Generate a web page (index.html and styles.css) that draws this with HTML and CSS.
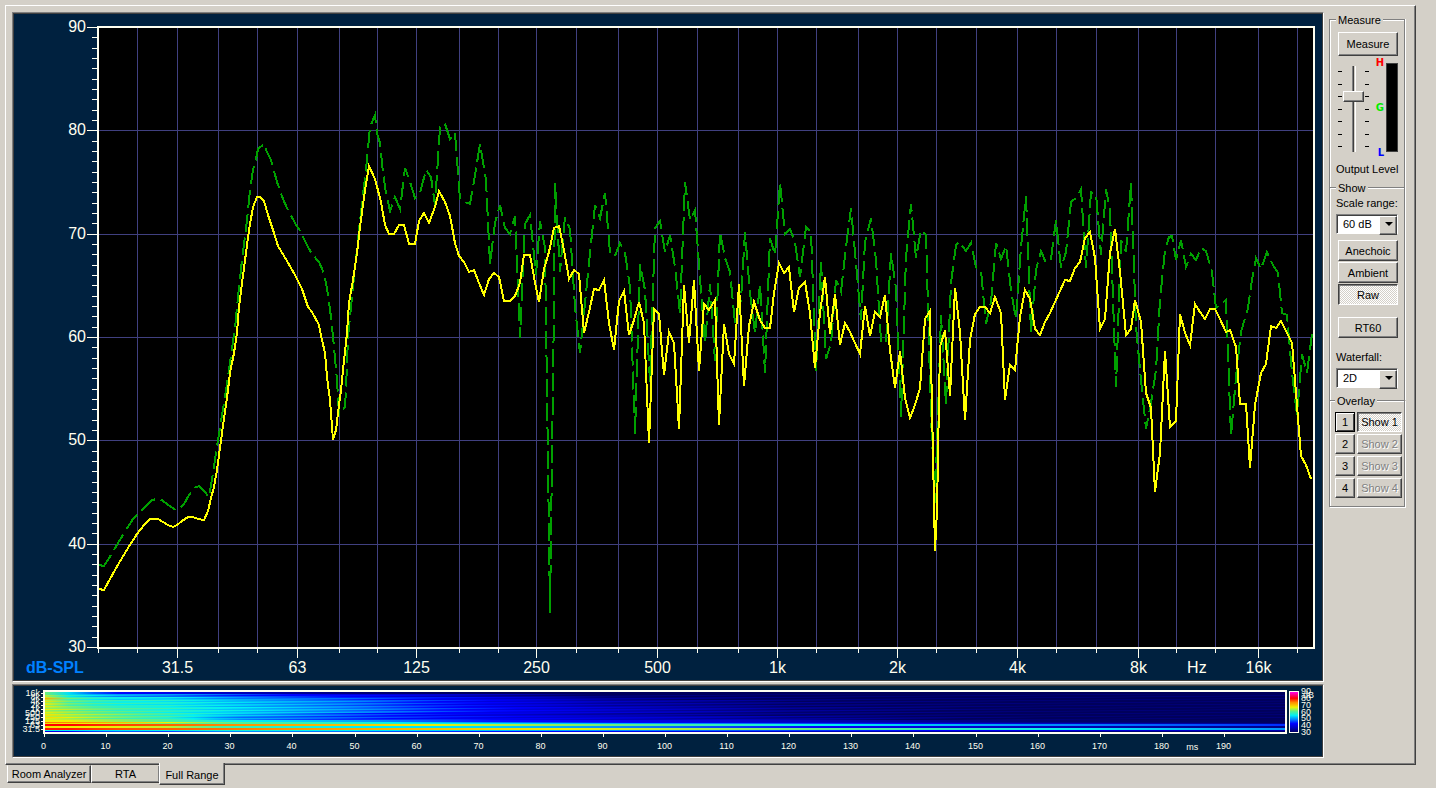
FILE: index.html
```html
<!DOCTYPE html>
<html lang="en">
<head>
  <meta charset="UTF-8">
  <title>Room Analyzer</title>
  <link rel="stylesheet" href="styles.css">
</head>
<body>
  <main class="sheet">
    <div class="charts">
      <div class="panel panel-response">
        <svg id="response" class="chart" role="img" aria-label="Frequency response"></svg>
      </div>
      <div class="panel panel-waterfall">
        <svg id="waterfall" class="chart" role="img" aria-label="Waterfall"></svg>
      </div>
    </div>

    <div class="sidebar">
      <section class="group group-measure">
        <h2 class="group-title">Measure</h2>
        <button class="btn btn-measure">Measure</button>
        <div class="levels">
          <div class="ticks"><i></i><i></i><i></i><i></i><i></i><i></i><i></i></div>
          <input type="range" id="outputLevel" class="fader" min="0" max="6" value="4">
          <div class="ticks"><i></i><i></i><i></i><i></i><i></i><i></i><i></i></div>
          <div class="marks">
            <b class="high">H</b>
            <b class="good">G</b>
            <b class="low">L</b>
          </div>
          <div class="meter"></div>
        </div>
        <label class="caption" for="outputLevel">Output Level</label>
      </section>

      <section class="group group-show">
        <h2 class="group-title">Show</h2>
        <label class="caption" for="scaleRange">Scale range:</label>
        <div class="combo">
          <select id="scaleRange">
            <option>30 dB</option>
            <option selected>60 dB</option>
            <option>90 dB</option>
          </select>
        </div>
        <div class="modes">
          <button class="btn">Anechoic</button>
          <button class="btn">Ambient</button>
          <button class="btn pressed">Raw</button>
        </div>
        <button class="btn btn-rt60">RT60</button>
        <label class="caption" for="waterfallMode">Waterfall:</label>
        <div class="combo">
          <select id="waterfallMode">
            <option selected>2D</option>
            <option>3D</option>
          </select>
        </div>
      </section>

      <section class="group group-overlay">
        <h2 class="group-title">Overlay</h2>
        <div class="overlays">
          <button class="btn focused">1</button><button class="btn pressed">Show 1</button>
          <button class="btn">2</button><button class="btn" disabled>Show 2</button>
          <button class="btn">3</button><button class="btn" disabled>Show 3</button>
          <button class="btn">4</button><button class="btn" disabled>Show 4</button>
        </div>
      </section>
    </div>
  </main>

  <nav class="tabs">
    <button class="tab tab-room">Room Analyzer</button>
    <button class="tab tab-rta">RTA</button>
    <button class="tab tab-full active">Full Range</button>
  </nav>

  <script src="charts.js"></script>
</body>
</html>
```

FILE: styles.css
```css
* {
  box-sizing: border-box;
}
body {
  margin: 0;
  padding: 5px 20px 0 5px;
  height: 100vh;
  min-height: 600px;
  display: flex;
  flex-direction: column;
  background: #d4d0c8;
  color: #000;
  font-family: "Liberation Sans", Arial, sans-serif;
  font-size: 11px;
  line-height: 14px;
}
button, select {
  font: inherit;
  color: inherit;
}

/* tab page */
.sheet {
  flex: 1;
  min-height: 0;
  display: flex;
  gap: 5px;
  padding: 6px 10px 6px 6px;
  border: solid;
  border-width: 1px;
  border-color: #fff #404040 #404040 #fff;
  box-shadow: inset -1px -1px #808080;
}
.charts {
  flex: 1;
  min-width: 0;
  display: flex;
  flex-direction: column;
  gap: 2px;
}
.panel {
  padding: 1px;
  border: 1px solid;
  border-color: #808080 #fff #fff #808080;
  background: #404040;
}
.panel-response {
  flex: 1;
  min-height: 0;
}
.panel-waterfall {
  height: 74px;
}
.chart {
  display: block;
  width: 100%;
  height: 100%;
  background: #00213f;
  overflow: hidden;
}

/* charts */
.grid {
  stroke: #404080;
  shape-rendering: crispEdges;
}
.tick {
  stroke: #fffff0;
  shape-rendering: crispEdges;
}
.frame {
  fill: none;
  stroke: #fffff0;
  stroke-width: 2;
  shape-rendering: crispEdges;
}
.plot {
  fill: #000;
}
.trace {
  fill: none;
  stroke: #ff0;
  stroke-width: 2;
  shape-rendering: crispEdges;
}
.trace-overlay {
  stroke: #00a000;
  stroke-dasharray: 18 6;
}
.axis {
  fill: #fffff0;
  font-size: 16px;
}
.unit {
  fill: #0080ff;
  font-size: 16px;
  font-weight: bold;
}
.small {
  fill: #fffff0;
  font-size: 9px;
}
.middle {
  text-anchor: middle;
}
.end {
  text-anchor: end;
}

/* sidebar */
.sidebar {
  width: 76px;
  padding-top: 7px;
}
.group {
  border: solid #808080;
  border-width: 1px 1px 0;
  box-shadow: inset 1px 1px #fff, 1px 0 #fff;
  padding: 0 6px;
}
.group-title {
  width: max-content;
  margin: -7px 0 0;
  padding: 0 2px;
  background: #d4d0c8;
  font-size: 11px;
  font-weight: normal;
}
.group-measure {
  height: 168px;
}
.group-show {
  height: 213px;
}
.group-overlay {
  height: 107px;
  padding: 0 2px 0 5px;
  border-bottom-width: 1px;
  box-shadow: inset 1px 1px #fff, 1px 1px #fff;
}
.caption {
  display: block;
  white-space: nowrap;
}
.btn {
  display: block;
  height: 21px;
  width: 60px;
  margin: 0 0 0 2px;
  padding: 0;
  border: 1px solid;
  border-color: #fff #404040 #404040 #fff;
  box-shadow: inset -1px -1px #808080;
  background: #d4d0c8;
}
.btn:disabled {
  color: #808080;
  text-shadow: 1px 1px #fff;
}
.btn.pressed {
  border-color: #404040 #fff #fff #404040;
  box-shadow: inset 1px 1px #808080;
  background: repeating-conic-gradient(#fff 0 25%, #d4d0c8 0 50%) 0 0 / 2px 2px;
}
.btn.focused {
  border-color: #000;
  box-shadow: inset 1px 1px #fff, inset -1px -1px #404040;
}
.btn-measure {
  height: 24px;
  margin-top: 5px;
}

.levels {
  display: flex;
  height: 100px;
  margin: 2px 0 4px;
  padding: 0 0 0 2px;
}
.ticks {
  width: 4px;
  height: 76px;
  margin-top: 13px;
  display: flex;
  flex-direction: column;
  justify-content: space-between;
}
.ticks i {
  height: 1px;
  background: #000;
}
.fader {
  appearance: none;
  writing-mode: vertical-lr;
  direction: rtl;
  width: 21px;
  height: 86px;
  margin: 8px 1px 0;
  background: linear-gradient(90deg, #808080 1px, #404040 1px 2px, #d4d0c8 2px 3px, #fff 3px) center / 4px 100% no-repeat;
}
.fader::-webkit-slider-thumb {
  appearance: none;
  width: 21px;
  height: 11px;
  border: 1px solid;
  border-color: #fff #404040 #404040 #fff;
  box-shadow: inset -1px -1px #808080;
  background: #d4d0c8;
}
.marks {
  width: 17px;
  padding-right: 2px;
  display: flex;
  flex-direction: column;
  justify-content: space-between;
  align-items: flex-end;
  font-family: "DejaVu Sans", sans-serif;
  font-size: 10px;
  line-height: 10px;
}
.high {
  color: #f00;
}
.good {
  color: #0e0;
}
.low {
  color: #00f;
}
.meter {
  width: 12px;
  height: 89px;
  margin-top: 5px;
  border: 1px solid #404040;
  background: #000;
}

.combo {
  position: relative;
  width: 62px;
  height: 20px;
  margin-top: 4px;
}
.combo select {
  appearance: none;
  width: 100%;
  height: 100%;
  padding: 0 18px 0 6px;
  border: 1px solid;
  border-color: #808080 #fff #fff #808080;
  border-radius: 0;
  box-shadow: inset 1px 1px #404040;
  background: #fff;
}
.combo::before {
  content: "";
  position: absolute;
  top: 2px;
  right: 1px;
  width: 16px;
  height: 17px;
  border: 1px solid;
  border-color: #fff #404040 #404040 #fff;
  box-shadow: inset -1px -1px #808080;
  background: #d4d0c8;
  pointer-events: none;
}
.combo::after {
  content: "";
  position: absolute;
  top: 8px;
  right: 5px;
  border: 4px solid transparent;
  border-top-color: #000;
  border-bottom: 0;
  pointer-events: none;
}
.group-show .group-title {
  margin-bottom: 1px;
}
.modes {
  display: flex;
  flex-direction: column;
  gap: 1px;
  margin-top: 6px;
}
.btn-rt60 {
  margin: 12px 0 12px 2px;
}

.overlays {
  display: grid;
  grid-template-columns: 20px 45px;
  gap: 2px;
  margin-top: 4px;
}
.overlays .btn {
  width: 100%;
  height: 20px;
  margin: 0;
}

/* tabs */
.tabs {
  display: flex;
  height: 23px;
  padding-left: 2px;
}
.tab {
  height: 18px;
  padding: 0;
  border: 1px solid;
  border-color: transparent #404040 #404040 #fff;
  box-shadow: inset -1px -1px #808080;
  background: #d4d0c8;
}
.tab-room {
  width: 84px;
}
.tab-rta {
  width: 68px;
  border-right: 0;
}
.tab-full {
  width: 66px;
}
.tab.active {
  height: 22px;
  margin-top: -2px;
  padding-top: 2px;
  border-top: 0;
  z-index: 1;
}
```

FILE: charts.js
```js
const NS = 'http://www.w3.org/2000/svg';

// traces are stored as x,y pairs on this recording area
const AREA = { left: 98, top: 27, width: 1216, height: 620 };

const current = `99,589 104,590 110,579 119,563 128,548 137,534 144,525 150,519 158,519 163,522 168,525
173,527 177,525 182,521 188,517 193,517 198,519 204,520 208,511 211,498 214,487 217,470 222,433 228,390
230,373 234,353 237,333 239,307 242,283 246,253 249,230 253,207 257,197 260,197 264,201 268,215 273,230
278,246 287,261 295,275 302,289 308,307 312,312 319,325 322,340 325,353 327,377 330,400 333,440 336,430
338,413 341,390 343,370 347,333 349,303 353,280 357,253 360,227 365,190 369,166 375,179 381,202 385,225
389,234 394,234 399,225 404,225 409,244 415,244 419,221 424,213 429,223 435,207 439,191 445,202 450,216
455,243 459,256 464,262 469,272 474,270 479,283 484,295 489,279 494,273 499,277 504,301 510,301 515,296
520,283 524,255 530,255 534,277 539,302 544,269 549,252 554,228 559,226 564,250 569,279 574,270 579,274
584,333 589,312 594,289 599,290 604,280 609,323 614,350 619,301 624,291 629,335 634,320 639,302 644,323
649,443 654,309 659,314 664,375 669,332 674,343 679,429 684,285 689,343 694,280 699,371 704,304 709,310
715,300 719,425 724,324 729,354 734,364 739,284 744,386 749,326 754,302 760,320 765,328 770,328 774,293
779,263 784,273 789,267 794,312 799,288 805,282 810,313 815,368 820,313 825,277 830,334 835,294 840,345
845,323 850,332 860,354 865,306 870,336 875,312 880,317 885,295 890,350 895,388 900,351 905,398 910,418
915,405 920,388 925,319 930,311 933,455 935,551 937,510 940,347 945,330 950,396 955,288 960,332 965,420
970,340 975,314 980,307 985,307 990,313 995,297 1001,313 1005,400 1010,365 1015,370 1020,317 1025,290
1030,299 1035,329 1040,335 1045,322 1050,313 1065,280 1070,281 1075,268 1080,262 1085,238 1090,232
1095,258 1100,329 1105,319 1110,253 1115,229 1120,272 1126,335 1131,329 1135,300 1141,322 1146,393
1151,408 1155,492 1160,453 1165,351 1170,427 1176,421 1180,314 1185,333 1190,345 1195,304 1200,312
1205,319 1210,309 1215,309 1220,319 1226,332 1230,330 1236,347 1240,404 1246,404 1250,468 1255,405
1261,373 1266,364 1271,326 1276,328 1281,321 1292,343 1296,393 1301,456 1306,465 1311,479`;

const overlay = `99,565 104,566 111,555 118,543 126,530 133,519 146,506 152,500 157,499 162,500 168,505
176,510 180,508 184,504 189,495 194,488 199,486 204,491 209,497 213,473 218,440 225,397 230,363 235,328
238,297 242,260 247,220 250,190 253,170 256,159 258,149 264,144 267,152 271,160 277,182 283,199 288,210
295,223 300,231 308,247 312,254 319,262 323,271 326,283 328,295 331,317 334,347 337,380 339,415 345,407
346,390 348,337 353,287 359,230 367,160 370,127 375,115 377,133 380,143 383,173 386,193 390,211 395,197
400,209 405,168 410,182 415,198 420,193 426,170 431,177 435,205 440,127 443,124 445,124 450,139 455,133
460,199 465,202 470,204 475,175 480,144 486,180 490,264 495,223 500,205 505,228 510,234 515,216 520,338
525,224 530,215 536,275 540,221 545,248 548,463 550,613 554,303 555,183 560,272 565,217 570,229 575,307
580,353 585,303 590,253 595,205 600,218 605,193 610,253 615,256 620,243 625,253 630,287 635,434 640,264
645,290 650,382 655,228 660,221 665,252 670,235 675,267 680,313 685,182 690,220 695,210 700,278 705,343
710,284 715,361 720,232 725,258 730,272 735,323 741,300 745,232 750,293 755,333 760,284 765,373 770,238
775,255 780,183 785,234 790,229 795,242 800,277 806,227 811,232 816,371 821,262 826,359 831,343 836,280
841,292 846,247 851,208 856,263 861,320 865,242 871,218 876,260 881,341 886,343 891,253 896,288 901,417
906,257 911,204 916,258 921,230 926,235 931,417 935,503 938,413 941,315 946,405 951,283 956,245 959,242
966,251 971,243 976,267 981,271 986,324 991,302 996,243 1001,259 1006,246 1011,290 1016,319 1021,247
1026,196 1031,333 1036,270 1041,251 1046,263 1051,259 1056,220 1061,268 1066,252 1071,202 1077,197
1081,189 1086,268 1091,192 1096,194 1101,255 1106,189 1110,210 1116,387 1121,240 1126,252 1131,183
1136,327 1141,380 1146,429 1151,403 1156,370 1160,300 1165,250 1169,237 1172,236 1176,260 1181,240
1186,267 1191,254 1196,260 1201,248 1206,251 1212,272 1216,308 1226,300 1231,436 1236,377 1241,332
1248,308 1252,280 1256,258 1261,269 1267,252 1273,265 1278,273 1282,313 1287,315 1292,373 1297,415
1302,354 1307,373 1312,334`;

// level in dB of each waterfall band at these times (ms)
const times = [0, 4, 10, 20, 30, 50, 70, 90, 120, 160, 200];
const bands = [
  { rows: 2, db: [62, 54, 44, 41, 37, 32, 30, 30, 30, 30, 30] },
  { rows: 3, db: [64, 56, 51, 49, 46, 42, 36, 31, 30, 30, 30] },
  { rows: 3, db: [70, 60, 55, 54, 50, 46, 41, 34, 31, 30, 30] },
  { rows: 7, db: [66, 61, 57, 56, 53, 48, 42, 36, 32, 30, 30] },
  { rows: 6, db: [65, 63, 60, 57, 54, 49, 43, 38, 33, 30, 30] },
  { rows: 3, db: [67, 64, 62, 58, 53, 46, 41, 36, 32, 30, 30] },
  { rows: 4, db: [67, 65, 62, 58, 50, 46, 42, 39, 34, 30, 30] },
  { rows: 2, db: [67, 67, 64, 60, 56, 51, 44, 42, 37, 31, 30] },
  { rows: 1, db: [75, 74, 72, 67, 61, 57, 50, 44, 39, 33, 30] },
  { rows: 1, db: [68, 68, 66, 62, 60, 58, 55, 52, 47, 38, 33] },
  { rows: 2, db: [80, 80, 78, 76, 74, 70, 65, 62, 56, 50, 45] },
  { rows: 2, db: [68, 67, 67, 65, 59, 55, 54, 50, 44, 37, 33] },
  { rows: 2, db: [79, 79, 77, 76, 75, 72, 69, 66, 62, 56, 50] },
  { rows: 1, db: [56, 55, 54, 56, 57, 55, 53, 50, 46, 41, 36] },
  { rows: 1, db: [40, 42, 48, 46, 50, 48, 44, 42, 38, 33, 31] }
];
const palette = [
  [30, 0, 0, 92], [37, 0, 0, 190], [43, 0, 0, 255], [49, 0, 130, 255], [55, 0, 240, 245],
  [61, 90, 240, 140], [67, 240, 240, 0], [74, 255, 140, 0], [80, 255, 0, 0], [90, 255, 0, 255]
];

function add(parent, name, attrs, text) {
  const el = document.createElementNS(NS, name);
  for (const key in attrs) el.setAttribute(key, attrs[key]);
  if (text !== undefined) el.textContent = text;
  parent.appendChild(el);
  return el;
}

function line(svg, cls, x1, y1, x2, y2) {
  add(svg, 'path', { class: cls, d: `M${x1} ${y1}L${x2} ${y2}` });
}

function color(db) {
  const v = Math.max(30, Math.min(90, db));
  let i = 1;
  while (palette[i][0] < v) i++;
  const a = palette[i - 1], b = palette[i];
  const t = (v - a[0]) / (b[0] - a[0]);
  return `rgb(${[1, 2, 3].map(n => Math.round(a[n] + (b[n] - a[n]) * t)).join(',')})`;
}

function levelAt(band, t) {
  let n = 1;
  while (times[n] < t) n++;
  const k = (t - times[n - 1]) / (times[n] - times[n - 1]);
  return band.db[n - 1] + (band.db[n] - band.db[n - 1]) * k;
}

function drawResponse() {
  const svg = document.getElementById('response');
  svg.replaceChildren();
  const left = 84, top = 13;
  const w = svg.clientWidth - left - 8;
  const h = svg.clientHeight - top - 33;
  const bottom = top + h;

  add(svg, 'rect', { class: 'plot', x: left, y: top, width: w, height: h });

  for (let db = 30; db <= 90; db++) {
    const y = Math.round(bottom - (db - 30) / 60 * h) + 0.5;
    const major = db % 10 === 0;
    line(svg, 'tick', left - (major ? 11 : 6), y, left, y);
    if (major) {
      if (db > 30 && db < 90) line(svg, 'grid', left, y, left + w, y);
      add(svg, 'text', { class: 'axis end', x: left - 12, y: y + 4 }, db);
    }
  }

  const freqs = [20, 25, 31.5, 40, 50, 63, 80, 100, 125, 160, 200, 250, 315, 400, 500, 630, 800];
  const all = freqs.concat(freqs.slice(7).map(f => f * 10), [10000, 12500, 16000, 20000]);
  all.forEach((f, i) => {
    const x = Math.round(left + Math.log2(f / 20) / Math.log2(1105) * w) + 0.5;
    const major = i % 3 === 2;
    if (i > 0) line(svg, 'grid', x, top, x, bottom);
    line(svg, 'tick', x, bottom, x, bottom + (major ? 11 : 6));
    if (major) {
      const name = f < 1000 ? f : Math.floor(f / 1000) + 'k';
      add(svg, 'text', { class: 'axis middle', x: x, y: bottom + 26 }, name);
      if (f === 8000) add(svg, 'text', { class: 'axis middle', x: x + w * 0.048, y: bottom + 26 }, 'Hz');
    }
  });

  add(svg, 'text', { class: 'unit', x: 12, y: bottom + 26 }, 'dB-SPL');

  [['trace trace-overlay', overlay], ['trace', current]].forEach(([cls, data]) => {
    const points = data.trim().split(/\s+/).map(p => {
      const [x, y] = p.split(',');
      return (left + (x - AREA.left) / AREA.width * w).toFixed(1) + ',' +
             (top + (y - AREA.top) / AREA.height * h).toFixed(1);
    });
    add(svg, 'polyline', { class: cls, points: points.join(' ') });
  });

  add(svg, 'rect', { class: 'frame', x: left, y: top, width: w, height: h + 1 });
}

function drawWaterfall() {
  const svg = document.getElementById('waterfall');
  svg.replaceChildren();
  const left = 30, top = 5;
  const w = svg.clientWidth - left - 36;
  const h = svg.clientHeight - top - 24;
  const bottom = top + h;
  const defs = add(svg, 'defs', {});
  const total = bands.reduce((n, b) => n + b.rows, 0);

  let row = 0;
  bands.forEach(band => {
    for (let i = 0; i < band.rows; i++, row++) {
      const grad = add(defs, 'linearGradient', { id: 'row' + row });
      const wobble = band.rows > 2 ? 2 : 0;
      for (let t = 0; t <= 200; t += 4) {
        const db = levelAt(band, t) + wobble * Math.sin(row * 2.3 + t * 0.13);
        add(grad, 'stop', { offset: t / 200, 'stop-color': color(db) });
      }
      add(svg, 'rect', {
        x: left, y: top + 1 + row, width: w, height: 1 + h - total, fill: `url(#row${row})`
      });
    }
  });

  for (let t = 0; t < 200; t += 10) {
    const x = Math.round(left + t / 200 * w) + 0.5;
    line(svg, 'tick', x, bottom, x, bottom + 5);
    add(svg, 'text', { class: 'small middle', x: x - 1, y: bottom + 17 }, t);
    if (t === 180) add(svg, 'text', { class: 'small middle', x: x + w * 0.024, y: bottom + 18 }, 'ms');
  }
  ['16k', '8k', '4k', '2k', '1k', '500', '250', '125', '63', '31.5'].forEach((name, i) => {
    const y = top + 2 + i * 4;
    line(svg, 'tick', left - 3, y + 0.5, left, y + 0.5);
    add(svg, 'text', { class: 'small end', x: left - 4, y: y + 3 }, name);
  });
  add(svg, 'rect', { class: 'frame', x: left, y: top, width: w, height: h + 1 });

  // level scale
  const barX = left + w + 4;
  for (let i = 0; i < h; i++) {
    add(svg, 'rect', { x: barX, y: top + i, width: 8, height: 1, fill: color(90 - i / h * 60) });
  }
  add(svg, 'path', {
    class: 'tick', fill: 'none',
    d: `M${barX - 0.5} ${top + 0.5}h9v${h}h-9z`
  });
  for (let db = 30; db <= 90; db += 10) {
    add(svg, 'text', { class: 'small', x: barX + 11, y: bottom + 3 - (db - 30) / 60 * h }, db);
  }
  add(svg, 'text', { class: 'small', x: barX + 13, y: top + 7 }, 'dB');
}

function draw() {
  drawResponse();
  drawWaterfall();
}

window.addEventListener('resize', draw);
draw();
```
